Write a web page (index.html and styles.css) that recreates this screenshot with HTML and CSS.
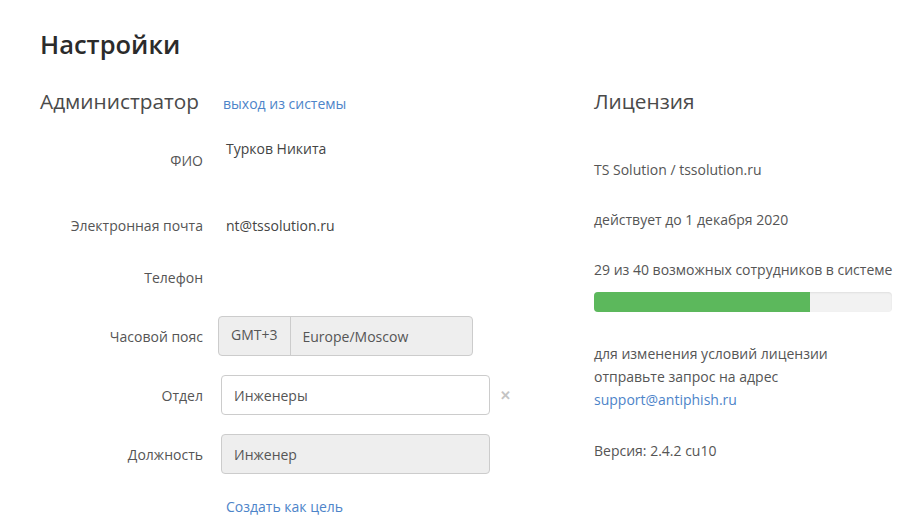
FILE: index.html
```html
<!DOCTYPE html>
<html lang="ru">
<head>
<meta charset="utf-8">
<title>Настройки</title>
<link rel="stylesheet" href="styles.css">
</head>
<body>
<div class="page">
  <h1 class="title">Настройки</h1>
  <div class="columns">
    <section class="admin">
      <div class="section-head">
        <h2 class="heading">Администратор</h2>
        <a class="link logout" href="#">выход из системы</a>
      </div>
      <div class="form">
        <div class="row row-name">
          <div class="label">ФИО</div>
          <div class="value value-top">Турков Никита</div>
        </div>
        <div class="row row-email">
          <div class="label">Электронная почта</div>
          <div class="value">nt@tssolution.ru</div>
        </div>
        <div class="row row-phone">
          <div class="label">Телефон</div>
          <div class="value"></div>
        </div>
        <div class="row row-input">
          <div class="label">Часовой пояс</div>
          <div class="value">
            <div class="input-group">
              <span class="addon">GMT+3</span>
              <span class="group-field">Europe/Moscow</span>
            </div>
          </div>
        </div>
        <div class="row row-input">
          <div class="label">Отдел</div>
          <div class="value value-clear">
            <div class="field">Инженеры</div>
            <span class="clear">✕</span>
          </div>
        </div>
        <div class="row row-input">
          <div class="label">Должность</div>
          <div class="value">
            <div class="field field-disabled">Инженер</div>
          </div>
        </div>
        <div class="row row-link">
          <div class="label"></div>
          <div class="value"><a class="link goal" href="#">Создать как цель</a></div>
        </div>
      </div>
    </section>
    <section class="license">
      <div class="section-head">
        <h2 class="heading">Лицензия</h2>
      </div>
      <p class="info info-first">TS Solution / tssolution.ru</p>
      <p class="info">действует до 1 декабря 2020</p>
      <p class="info nowrap">29 из 40 возможных сотрудников в системе</p>
      <div class="progress"><div class="progress-bar" style="width:72.5%"></div></div>
      <p class="info info-block">для изменения условий лицензии<br>отправьте запрос на адрес<br><a class="link" href="#">support@antiphish.ru</a></p>
      <p class="info info-version">Версия: 2.4.2 cu10</p>
    </section>
  </div>
</div>
</body>
</html>
```
FILE: styles.css
```css
* { box-sizing: border-box; }
html, body { margin: 0; padding: 0; background: #fff; }
body {
  font-family: "Open Sans", "Noto Sans", sans-serif;
  font-size: 14px;
  color: #444;
}
.page { padding: 26px 0 0 40px; width: 905px; height: 518px; overflow: hidden; }
.title {
  margin: 0;
  font-size: 25.5px;
  line-height: 36px;
  font-weight: 600;
  color: #2b2b2b;
}
.columns {
  display: grid;
  grid-template-columns: 520px 298px;
  column-gap: 34px;
  margin-top: 25px;
}
.section-head {
  display: flex;
  align-items: baseline;
  height: 28px;
}
.heading {
  margin: 0;
  font-size: 20.8px;
  line-height: 28px;
  font-weight: 400;
  color: #4a4a4a;
}
.link { color: #4d84c9; text-decoration: none; }
.logout { margin-left: 24px; font-size: 14px; }
.form { margin-top: 25px; }
.row {
  display: grid;
  grid-template-columns: 163px 300px;
  column-gap: 18px;
  align-items: center;
  height: 40px;
}
.label { text-align: right; color: #555; }
.value { color: #444; }
.value-top { align-self: start; margin-top: -1px; padding-left: 5px; }
.row-email .value { padding-left: 5px; }
.row-name { margin-bottom: 25px; }
.row-email { margin-bottom: 12px; }
.row-phone { margin-bottom: 19px; }
.row-input { margin-bottom: 19px; }
.row-link { height: 27px; margin-top: 0; }
.goal { padding-left: 5px; }
.input-group {
  display: flex;
  margin-left: -3px;
  width: 255px;
  height: 40px;
  border: 1px solid #ccc;
  border-radius: 4px;
  background: #eee;
  overflow: hidden;
}
.addon {
  display: flex;
  align-items: center;
  padding: 0 12px;
  border-right: 1px solid #ccc;
  color: #555;
  margin-top: -3px;
}
.group-field {
  display: flex;
  align-items: center;
  padding: 0 12px;
  color: #555;
}
.value-clear { display: flex; align-items: center; }
.field {
  width: 269px;
  height: 40px;
  border: 1px solid #ccc;
  border-radius: 4px;
  padding: 0 12px;
  display: flex;
  align-items: center;
  color: #555;
  background: #fff;
}
.field-disabled { background: #eee; }
.clear {
  margin-left: 10px;
  font-size: 13px;
  color: #c4c4c4;
  font-weight: 700;
}
.license .info {
  margin: 27px 0 0;
  line-height: 23px;
  color: #555;
}
.license .nowrap { white-space: nowrap; }
.license .info-first { margin-top: 43px; }
.license .info-block { margin-top: 30px; }
.license .info-version { margin-top: 28px; }
.progress {
  margin-top: 11px;
  height: 20px;
  width: 298px;
  background: #f2f2f2;
  border-radius: 4px;
  overflow: hidden;
  box-shadow: inset 0 1px 2px rgba(0,0,0,0.08);
}
.progress-bar { height: 100%; background: #5cb85c; }
```
